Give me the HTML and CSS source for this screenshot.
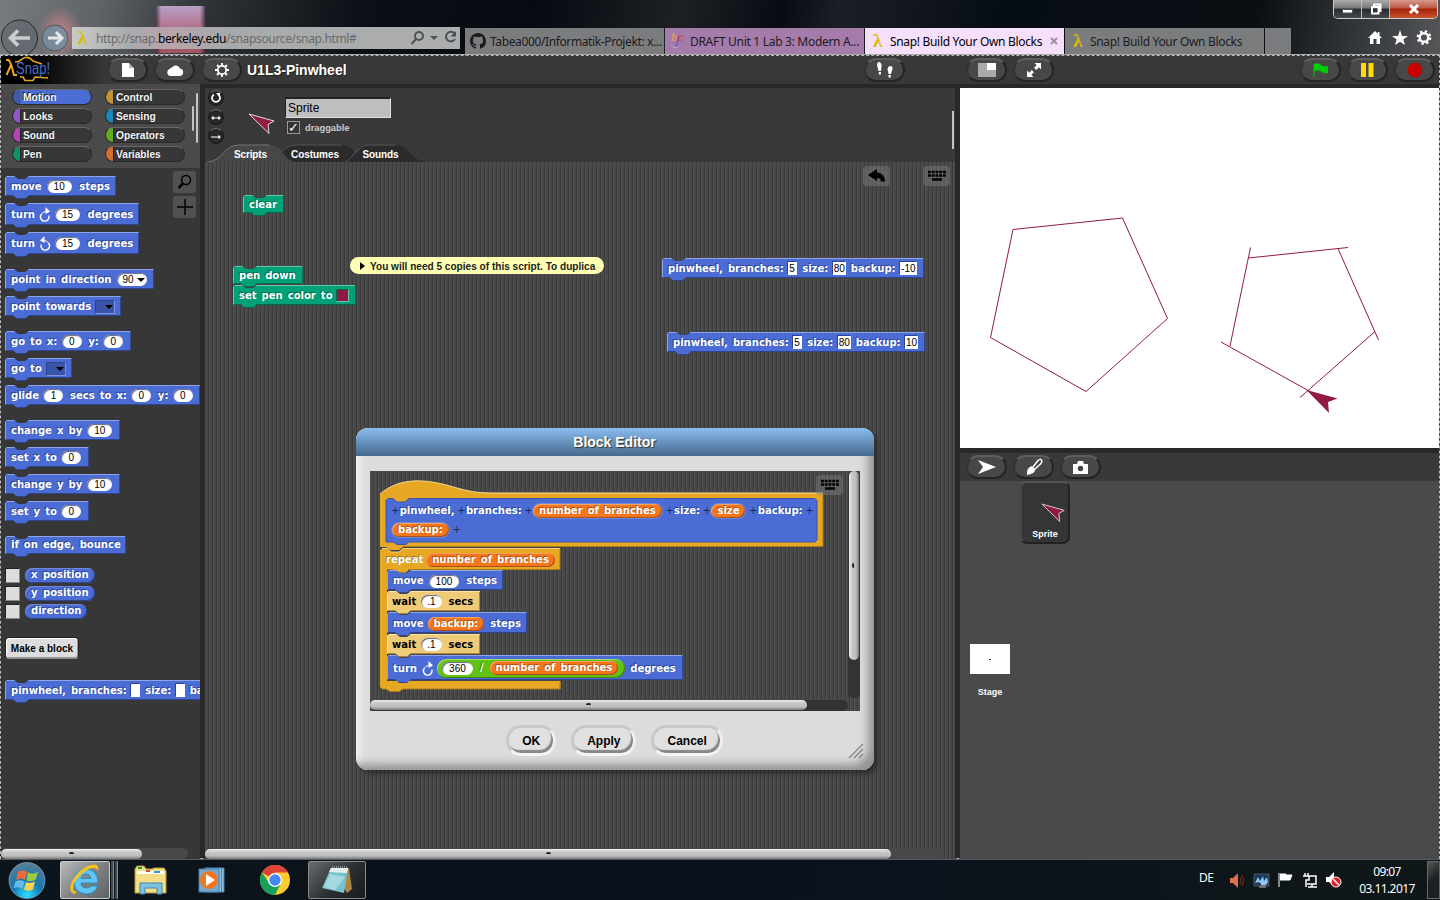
FILE: index.html
```html
<!DOCTYPE html>
<html lang="de">
<head>
<meta charset="utf-8">
<title>Snap! Build Your Own Blocks</title>
<link rel="stylesheet" href="styles.css">
</head>
<body>
<svg width="0" height="0" class="defs">
  <defs>
    <symbol id="cw" viewBox="0 0 12 16"><path d="M2.500 7A4.300 4.300 0 1 0 9.800 8.500" fill="none" stroke="#fff" stroke-width="1.400"/><path d="M2.500 7Q4 4.500 7 4.500" fill="none" stroke="#fff" stroke-width="1"/><path d="M6.500 0L11 4.500L6.500 7Z" fill="#fff"/></symbol>
    <symbol id="ccw" viewBox="0 0 12 16"><path d="M9.500 7A4.300 4.300 0 1 1 2.200 8.500" fill="none" stroke="#fff" stroke-width="1.400"/><path d="M9.500 7Q8 4.500 5 4.500" fill="none" stroke="#fff" stroke-width="1"/><path d="M5.500 0L1 4.500L5.500 7Z" fill="#fff"/></symbol>
    <symbol id="arrow" viewBox="0 0 28 22"><path d="M1 1L26 8L20 11.500L21 20.500Z" fill="#901a44" stroke="#ddd" stroke-width="1"/></symbol>
    <symbol id="keys" viewBox="0 0 18 12"><path d="M0 2H18M0 5.500H18" stroke="#000" stroke-width="2.600" stroke-dasharray="2.900 .85"/><path d="M4 9.500H14" stroke="#000" stroke-width="2.500"/></symbol>
  </defs>
</svg>

<header class="chrome">
  <svg class="nav" width="72" height="54" viewBox="0 0 72 54"><circle cx="19.500" cy="38" r="18" fill="#586068" fill-opacity=".45" stroke="#26292c"/><path d="M30 38H11M18 30.500L10.500 38L18 45.500" fill="none" stroke="#ccc" stroke-width="3.600"/><circle cx="55" cy="38" r="13" fill="#6e93a6" fill-opacity=".7" stroke="#4d565d"/><path d="M48 38H61M56 32L62 38L56 44" fill="none" stroke="#e2e8ea" stroke-width="3"/></svg>
  <div class="address"><span class="lam">λ</span><span class="url">http://snap.<b>berkeley.edu</b>/snapsource/snap.html#</span>
    <svg width="50" height="20" viewBox="0 0 50 20"><g fill="none" stroke="#4e5153" stroke-width="2"><circle cx="9" cy="8" r="4"/><path d="M6 11L1.500 16M44.500 5.500A4.800 4.800 0 1 0 45 11"/></g><path d="M20 8H28L24 12ZM46 3V8.500H40.500Z" fill="#4e5153"/></svg>
  </div>
  <nav class="tabs">
    <div class="tab t1"><svg width="16" height="16" viewBox="0 0 16 16"><path fill="#1b1b1b" d="M8 0C3.580 0 0 3.580 0 8c0 3.540 2.290 6.530 5.470 7.590.4.070.55-.17.55-.38v-1.490c-2.010.37-2.530-.49-2.690-.94-.09-.23-.48-.94-.82-1.130-.28-.15-.68-.52-.01-.53.63-.01 1.080.58 1.230.82.72 1.210 1.870.87 2.330.66.07-.52.28-.87.51-1.070-1.780-.2-3.640-.89-3.640-3.950 0-.87.31-1.590.82-2.150-.08-.2-.36-1.020.08-2.120 0 0 .67-.21 2.200.82a7.600 7.600 0 0 1 4 0c1.530-1.040 2.200-.82 2.200-.82.44 1.100.16 1.920.08 2.120.51.56.82 1.270.82 2.150 0 3.070-1.870 3.750-3.650 3.950.29.25.54.73.54 1.480v2.200c0 .21.15.46.55.38A8 8 0 0 0 16 8c0-4.420-3.580-8-8-8Z"/></svg><span>Tabea000/Informatik-Projekt: x...</span></div>
    <div class="tab t2"><svg class="bjc" width="15" height="18" viewBox="0 0 15 18"><text x="1" y="9" fill="#e09a5c">b</text><text x="6" y="12" fill="#615fb9">j</text><text x="8" y="9" fill="#d14a60">c</text><path d="M1 13Q5 18 9 14" fill="none" stroke="#b9a5cf"/></svg><span>DRAFT Unit 1 Lab 3: Modern A...</span></div>
    <div class="tab t3"><span class="lam">λ</span><span>Snap! Build Your Own Blocks</span><svg width="8" height="8" viewBox="0 0 8 8"><path d="M1 1L7 7M7 1L1 7" stroke="#a08fa2" stroke-width="2"/></svg></div>
    <div class="tab t4"><span class="lam">λ</span><span>Snap! Build Your Own Blocks</span></div>
    <div class="tab t5"></div>
  </nav>
  <div class="winside">
    <div class="winbtns"><span><svg width="11" height="10" viewBox="0 0 11 10"><path d="M.5 5.500H10.500V9H.5Z" fill="#fff" stroke="#555"/></svg></span><span><svg width="12" height="12" viewBox="0 0 12 12"><path d="M4 3V1.500H10.500V8H9M2 4H8.500V10.500H2Z" fill="none" stroke="#fff" stroke-width="2"/></svg></span><span class="x"><svg width="12" height="10" viewBox="0 0 12 10"><path d="M2 1L10 9M10 1L2 9" stroke="#fff" stroke-width="3"/></svg></span></div>
    <svg class="fav" width="64" height="18" viewBox="0 0 64 18"><path d="M7 2L0 9H2V15H5.500V10H8.500V15H12V9H14L11.500 6.500V3H9.800V4.700Z" fill="#fff"/><path d="M32 1L34 7H40L35.300 10.500L37 16L32 12.700L27 16L28.700 10.500L24 7H30Z" fill="#fff"/><circle cx="56" cy="8.500" r="4.300" fill="none" stroke="#fff" stroke-width="2.400"/><circle cx="56" cy="8.500" r="6.200" fill="none" stroke="#fff" stroke-width="2.300" stroke-dasharray="2.400 2.470"/></svg>
  </div>
</header>

<main class="app">
  <div class="toolbar">
    <div class="logo"><svg width="50" height="27" viewBox="0 0 50 27"><path d="M10 6Q14 6 17 3Q23 -1 28 5L37 8M15 21L18 21L20 24.500H28L30 21L43 22" fill="none" stroke="#e5a418" stroke-width="1.600"/><path d="M1 4H3.500Q5.500 5 9 19H12M6 9L1.500 19" fill="none" stroke="#f0a818" stroke-width="2"/><text x="11" y="18" class="logotext" textLength="34" lengthAdjust="spacingAndGlyphs">Snap!</text></svg></div>
    <div class="btn"><svg width="12" height="14" viewBox="0 0 12 14"><path d="M0 0H7V5H12V14H0Z" fill="#fff"/><path d="M7 0L12 5H7Z" fill="#bbb"/></svg></div>
    <div class="btn"><svg width="18" height="12" viewBox="0 0 18 12"><path d="M4 12A3.700 3.700 0 0 1 3.500 5A3 3 0 0 1 6 3.500A4.500 4.500 0 0 1 14 4.500A3.800 3.800 0 0 1 14 12Z" fill="#fff"/></svg></div>
    <div class="btn"><svg width="16" height="16" viewBox="0 0 16 16"><circle cx="8" cy="8" r="4.200" fill="none" stroke="#fff" stroke-width="1.800"/><path d="M8 1V4M8 12V15M1 8H4M12 8H15M3 3L5 5M11 11L13 13M13 3L11 5M5 11L3 13" stroke="#fff" stroke-width="1.800"/></svg></div>
    <h1>U1L3-Pinwheel</h1>
    <div class="btn foot"><svg width="18" height="16" viewBox="0 0 18 16"><path d="M1 3Q1 0 3.500 0Q6 1 5.500 5L5 9H2.500ZM2.700 10H5V12Q4 13.500 2.800 12Z" fill="#fff"/><path d="M16.500 7Q17 4 14.500 4Q12 4 11.500 7L12.500 12H15ZM12.500 13H14.800V15Q13.500 16.500 12.500 15Z" fill="#fff"/></svg></div>
    <div class="btn small"><svg width="18" height="14" viewBox="0 0 18 14"><path d="M0 0H18V14H0Z" fill="#aaa"/><path d="M9 0H18V7H9Z" fill="#fff"/></svg></div>
    <div class="btn"><svg width="16" height="16" viewBox="0 0 16 16"><path d="M8.500 1H15V7.500L12.800 5.300L10.300 8L8 5.700L10.700 3.200ZM7.500 15H1V8.500L3.200 10.700L5.700 8L8 10.300L5.300 12.800Z" fill="#fff"/></svg></div>
    <div class="btn flag"><svg width="16" height="16" viewBox="0 0 16 16"><path d="M1 2V15" stroke="#00b000" stroke-width="1.500"/><path d="M1 2Q5 0 8 3Q11 5 15 4V11Q11 12 8 9.500Q5 7.500 1 9.500Z" fill="#0c0"/></svg></div>
    <div class="btn"><svg width="13" height="14" viewBox="0 0 13 14"><path d="M0 0H5V14H0ZM7.500 0H12.500V14H7.500Z" fill="#ffd900"/></svg></div>
    <div class="btn"><svg width="16" height="16" viewBox="0 0 16 16"><path d="M5 1H11L15 5V11L11 15H5L1 11V5Z" fill="#c80000"/></svg></div>
  </div>

  <div class="cols">
    <aside class="left">
      <div class="cats">
        <div class="cat on c1">Motion</div><div class="cat c2">Control</div>
        <div class="cat c3">Looks</div><div class="cat c4">Sensing</div>
        <div class="cat c5">Sound</div><div class="cat c6">Operators</div>
        <div class="cat c7">Pen</div><div class="cat c8">Variables</div>
        <i class="grip g1"></i><i class="grip g2"></i>
      </div>
      <div class="palette">
        <div class="tools"><div class="tool"><svg width="16" height="16" viewBox="0 0 16 16"><circle cx="9" cy="6" r="4.500" fill="none" stroke="#000" stroke-width="1.500"/><path d="M6 9.500L1.500 14" stroke="#000" stroke-width="2.500"/></svg></div><div class="tool"><svg width="16" height="16" viewBox="0 0 16 16"><path d="M0 8H16M8 0V16" stroke="#000" stroke-width="1.500"/></svg></div></div>
        <div class="block">move<span class="num">10</span>steps</div>
        <div class="block tall">turn<svg width="12" height="16"><use href="#cw"/></svg><span class="num">15</span>degrees</div>
        <div class="block tall">turn<svg width="12" height="16"><use href="#ccw"/></svg><span class="num">15</span>degrees</div>
        <div class="block sec dir">point in direction<span class="num dd">90<i></i></span></div>
        <div class="block">point towards<span class="menu"></span></div>
        <div class="block sec">go to x:<span class="num one">0</span>y:<span class="num one">0</span></div>
        <div class="block">go to<span class="menu"></span></div>
        <div class="block">glide<span class="num one">1</span>secs to x:<span class="num one">0</span>y:<span class="num one">0</span></div>
        <div class="block sec">change x by<span class="num">10</span></div>
        <div class="block">set x to<span class="num one">0</span></div>
        <div class="block">change y by<span class="num">10</span></div>
        <div class="block">set y to<span class="num one">0</span></div>
        <div class="block sec low">if on edge, bounce</div>
        <div class="watch first"><i></i><span>x position</span></div>
        <div class="watch"><i></i><span>y position</span></div>
        <div class="watch"><i></i><span>direction</span></div>
        <button class="make">Make a block</button>
        <div class="block custom">pinwheel, branches:<span class="slot e"></span>size:<span class="slot e"></span>backup:<span class="slot e"></span></div>
        <div class="hbar"><i></i></div>
      </div>
    </aside>

    <section class="mid">
      <div class="spritebar">
        <div class="rot"><i><svg width="10" height="10" viewBox="0 0 10 10"><path d="M3 1.500A4 4 0 1 0 7 1.500" fill="none" stroke="#fff" stroke-width="1.700"/><path d="M5 0H9V4Z" fill="#fff"/></svg></i><i><svg width="10" height="10" viewBox="0 0 10 10"><path d="M1 6H9M2.500 4.500L1 6L2.500 7.500M7.500 4.500L9 6L7.500 7.500" fill="none" stroke="#fff" stroke-width="1.100"/></svg></i><i><svg width="10" height="10" viewBox="0 0 10 10"><path d="M0 6H9M7.500 4.500L9 6L7.500 7.500" fill="none" stroke="#fff" stroke-width="1.100"/></svg></i></div>
        <svg class="costume" width="28" height="22"><use href="#arrow"/></svg>
        <div class="name"><div class="field">Sprite</div><div class="drag"><i>✓</i>draggable</div></div>
        <svg class="stabs" width="220" height="18" viewBox="0 0 220 18"><path d="M135 18C150 16 148 1 163 1H188C205 1 200 15 219 18Z" fill="#2b2b2b"/><path d="M135 18C150 16 148 1 163 1H188" fill="none" stroke="#555"/><path d="M55 18C75 16 75 1 90 1H135C148 1 148 15 160 18Z" fill="#2b2b2b"/><path d="M70 13C76 8 78 1 90 1H135M138 18C143 16 147 9 151 5" fill="none" stroke="#555"/><path d="M0 18C17 17 16 1 32 1H62C76 1 75 15 88 18Z" fill="#474747"/><path d="M0 18C17 17 16 1 32 1H62" fill="none" stroke="#777"/><text x="27" y="14" textLength="33">Scripts</text><text x="84" y="14" textLength="48">Costumes</text><text x="155.500" y="14" textLength="36">Sounds</text></svg>
        <i class="edge"></i>
      </div>
      <div class="scripts">
        <div class="key k1"><svg width="18" height="14" viewBox="0 0 18 14"><path d="M0 6L9 0V3.500Q16.500 4 17 12.500H13Q13 9 9 9V12Z" fill="#000"/></svg></div>
        <div class="key k2"><svg width="18" height="12"><use href="#keys"/></svg></div>
        <div class="block pen s1">clear</div>
        <div class="block pen s2">pen down</div>
        <div class="block pen s3">set pen color to<span class="swatch"></span></div>
        <div class="comment s4"><i></i>You will need 5 copies of this script. To duplica</div>
        <div class="block s5">pinwheel, branches:<span class="slot">5</span>size:<span class="slot">80</span>backup:<span class="slot">-10</span></div>
        <div class="block s6">pinwheel, branches:<span class="slot">5</span>size:<span class="slot">80</span>backup:<span class="slot">10</span></div>
        <div class="hbar wide"><i></i></div>

        <div class="dialog">
          <div class="dtitle">Block Editor</div>
          <div class="editor">
            <svg class="shapes" width="478" height="232" viewBox="0 0 478 232">
              <path d="M10 23C30 6 55 8 80 15C100 21 108 22 125 22H453V76H33L29 79H20L16 76H10Z" fill="#e6a822"/>
              <path d="M10 23C30 6 55 8 80 15C100 21 108 22 125 22H453" fill="none" stroke="#f5d891"/><path d="M453 23V75.500H33" fill="none" stroke="#a87a18"/>
              <path d="M12 77.500H17L21 81H29L33 77.500H190V98.500H39L36 101.500H27L23 98.500H17V210H190.500V218H33L29 220.500H20L16 218H12L10 216V79.500Z" fill="#e6a822"/>
              <path d="M12 77.500H17L21 81H29L33 77.500H190" fill="none" stroke="#f3cf7c"/><path d="M190 78V98.500H39M190 211V218H33L29 220.500H20L16 218H12" fill="none" stroke="#a87a18"/>
              <path d="M18 27.500H23L27 31H35L39 27.500H445L447 29.500V69L445 71H39L36 73.500H27L23 71H16V29.500Z" fill="#4a6cd4" stroke="#3a55a8"/>
            </svg>
            <div class="proto"><div class="row"><em>+</em>pinwheel,<em>+</em>branches:<em>+</em><span class="var o">number of branches</span><em>+</em>size:<em>+</em><span class="var o">size</span><em>+</em>backup:<em>+</em></div><div class="row"><span class="var o">backup:</span><em>+</em></div></div>
            <div class="rep">repeat<span class="var">number of branches</span></div>
            <div class="body">
              <div class="block b1">move<span class="num">100</span>steps</div>
              <div class="block ctl b2">wait<span class="num one">.1</span>secs</div>
              <div class="block b3">move<span class="var">backup:</span>steps</div>
              <div class="block ctl b4">wait<span class="num one">.1</span>secs</div>
              <div class="block b5">turn<svg width="12" height="16"><use href="#cw"/></svg><span class="op"><span class="num">360</span>/<span class="var">number of branches</span></span>degrees</div>
            </div>
            <div class="key k3"><svg width="18" height="12"><use href="#keys"/></svg></div>
            <div class="vbar"><i></i></div><div class="hbar in"><i></i></div>
          </div>
          <div class="dbtns"><button>OK</button><button>Apply</button><button>Cancel</button></div>
          <svg class="resize" width="14" height="14" viewBox="0 0 14 14"><path d="M0 14L14 0M5 14L14 5M10 14L14 10" stroke="#777" stroke-width="1.200"/></svg>
        </div>
      </div>
    </section>

    <section class="right">
      <svg class="stage" width="479" height="360" viewBox="960 88 479 360"><g fill="none" stroke="#901a44"><path d="M1013 229.500L1122.500 218L1167.500 318.500L1086 391.500L990.500 337.500Z"/><path d="M1230 346L1250.500 247.500M1248.500 258L1348 247.500M1338 248.500L1378.500 340M1375 331.500L1300 397.500M1310 391.500L1221 342"/></g><path d="M1306.500 390L1337.500 398.500L1328 402L1329 413Z" fill="#901a44"/></svg>
      <div class="cbar"><div class="btn"><svg width="18" height="14" viewBox="0 0 18 14"><path d="M0 0L18 7L0 14L5 7Z" fill="#fff"/></svg></div><div class="btn"><svg width="18" height="18" viewBox="0 0 18 18"><path d="M8 9L13 2.500Q15 .5 16.500 2Q17.500 4 15.500 6L10 11" fill="none" stroke="#fff" stroke-width="1.500"/><path d="M7 8L10.500 11.500Q9 16 2 17Q1 10 7 8Z" fill="#fff"/></svg></div><div class="btn"><svg width="16" height="13" viewBox="0 0 16 13"><path d="M0 3H4L5 0H10L11 3H15V13H0Z" fill="#fff"/><circle cx="7.500" cy="7.500" r="2.700" fill="#444"/></svg></div></div>
      <div class="corral">
        <div class="stagecell"><div class="thumb"><i></i></div><span>Stage</span></div>
        <div class="sprite"><svg width="28" height="22"><use href="#arrow"/></svg><span>Sprite</span></div>
      </div>
    </section>
  </div>
</main>

<footer class="taskbar">
  <svg class="start" width="40" height="40" viewBox="0 0 40 40"><defs><radialGradient id="orb" cx=".5" cy=".9" r=".9"><stop offset="0" stop-color="#2be0ff"/><stop offset=".45" stop-color="#1676b4"/><stop offset="1" stop-color="#5c7f96"/></radialGradient></defs><circle cx="20" cy="20.500" r="18" fill="url(#orb)" stroke="#9cb8c6" stroke-opacity=".6"/><path d="M11 12Q15 9 20 12L18 20Q14 17 9 20Z" fill="#ed6a35"/><path d="M21 12.500Q26 15 31 12L28.500 20Q24 22 19.500 20.500Z" fill="#9bcb3c"/><path d="M8.500 21.500Q13 19 17.500 21.500L15.500 29Q12 26 6.500 28Z" fill="#66bbea"/><path d="M19 22Q23 24 28 21.500L26 29.500Q22 32 17 29.500Z" fill="#fcd14c"/></svg>
  <div class="task ie"><svg width="32" height="34" viewBox="0 0 32 34"><path d="M29 20H12Q12.500 25 17.500 25Q21 25 22 23H28.500Q26 31 17 31Q5 30 5 18Q6 6 17.500 6Q29 7 29 20ZM12 15.500H22Q21.500 11 17 11Q12.500 11 12 15.500Z" fill="#62c4f4" fill-rule="evenodd" stroke="#1b88c8" stroke-width=".8"/><path d="M5 31C-5 27 7 6 22 2Q31 0 29 8Q27 3 20 6C9 11 1 24 5 28Q6 29 8 28Q7 31 5 31Z" fill="#f6c21c"/></svg></div><i class="stack"></i><i class="stack"></i>
  <svg class="tic a" width="34" height="32" viewBox="0 0 34 32"><path d="M1 5L3 2H10L12 5H18L20 4H30L32 7V29H1Z" fill="#f3dd86" stroke="#b99536"/><path d="M3 7H30V10H3Z" fill="#fff"/><path d="M4 3H8V5H4Z" fill="#2a9b39"/><path d="M12 6H16V8H12Z" fill="#d43"/><path d="M20 7H26V9H20Z" fill="#39d"/><path d="M6 30V19H28V30H23V24H11V30Z" fill="#80c1de" stroke="#3c87b2"/></svg>
  <svg class="tic b" width="30" height="30" viewBox="0 0 30 30"><path d="M8 3H27V27H8Z" fill="#8fbfe0" stroke="#4a86b4"/><path d="M2 4H22V27H2Z" fill="#77a9cf" stroke="#4a7fab"/><path d="M24.500 3V27" stroke="#4a86b4"/><circle cx="12" cy="15" r="9" fill="#f2761e"/><path d="M9 9L18 15L9 21Z" fill="#fff"/></svg>
  <svg class="tic c" width="30" height="30" viewBox="0 0 30 30"><circle cx="15" cy="15" r="15" fill="#fbcd2e"/><path d="M15 15L2 7.500A15 15 0 0 1 28 7.500H15Z" fill="#db4437"/><path d="M2 7.500A15 15 0 0 0 15 30L21 18L9 18Z" fill="#16a05d"/><circle cx="15" cy="15" r="7" fill="#fff"/><circle cx="15" cy="15" r="5.700" fill="#4587f3"/></svg>
  <div class="task note"><svg width="32" height="30" viewBox="0 0 32 30"><path d="M11 3H28L31 24L26 28Z" fill="#a98745"/><path d="M10 3H27L23 28L1 23Z" fill="#79c3cf"/><path d="M10 3H27L26 8L8 7Z" fill="#e3eef0"/><path d="M9 9L24 12L14 25L3 22Z" fill="#c3e7ea" opacity=".6"/><path d="M11 2H27" stroke="#888" stroke-width="2" stroke-dasharray="1 1"/></svg></div>
  <span class="lang">DE</span>
  <svg class="tray" width="116" height="20" viewBox="0 0 116 20"><path d="M0 8H3L8 3V18L3 13H0Z" fill="#df7047"/><path d="M10 7Q12 10 10 14M12 5Q15 10 12 16" fill="none" stroke="#70331c"/><path d="M24 4H39V16H24Z" fill="#16375a" stroke="#777" stroke-width=".6"/><path d="M25 13L28 7L30 11L33 6L34 11L37 7L38 12L36 15H32L29 12Z" fill="#91c4ef"/><path d="M29 17H36M31 15H35" stroke="#bbb"/><path d="M49 3V17M50 4H56V10H50M56 5H62L60 10H56" fill="#fff" stroke="#fff"/><path d="M78 6H86V14H77M82 14V17M78 17H87M73 6H79V10H76V17M75 3V6M78 3V6" fill="none" stroke="#fff" stroke-width="1.500"/><path d="M96 7H99L104 2V16L99 12H96Z" fill="#fff"/><circle cx="106" cy="12" r="5" fill="#e11c24" stroke="#fff"/><path d="M103 9L109 15" stroke="#fff" stroke-width="1.500"/></svg>
  <div class="clock"><span>09:07</span><span>03.11.2017</span></div><i class="desk"></i>
</footer>
</body>
</html>
```
FILE: styles.css
```css
* { box-sizing: border-box; }
body { margin: 0; width: 1440px; height: 900px; overflow: hidden; display: flex; flex-direction: column; background: #282828; font-family: "Liberation Sans", Arial, sans-serif; color: #fff; }
i, em { font-style: normal; display: block; }
svg { display: block; flex: none; }
.defs { position: absolute; }
button { font-family: inherit; padding: 0; }

/* browser frame */
.chrome { height: 55px; flex: none; display: flex; align-items: flex-end; font-family: "Noto Sans", sans-serif; font-size: 12px; border-bottom: 1px solid #aaa; background: radial-gradient(ellipse 22px 28px at 60px 34px, #a87c80 0 35%, transparent 100%), linear-gradient(90deg, rgba(11,16,22,.6), transparent 5px calc(100% - 5px), rgba(11,16,22,.6)) 156px 6px / 49px 47px no-repeat, linear-gradient(#b8a0c5 0, #b05f74 30px, #a45563 45px) 156px 6px / 49px 47px no-repeat, linear-gradient(100deg, #777c80 0, #5f6367 7%, #303438 14%, #0b1016 25%, #060b11 37%, #1d2025 47%, #080c12 54%, #1b1f25 58%, #070d15 69%, #0b0f14 87%, #555759 100%); }
.nav { height: 54px; overflow: hidden; }
.address { width: 388px; height: 22px; margin: 0 0 5px; display: flex; align-items: center; background: linear-gradient(90deg, #c7cbc5, #a9aaab 15%, #b9a3ab 25%, #a8a9aa 38%, #adafaf); color: #686b6d; }
.lam { color: #d9bb00; font: bold 19px/20px "Liberation Serif", serif; width: 15px; text-align: center; flex: none; }
.address .lam { margin: 0 6px 0 3px; }
.url { width: 314px; font-size: 12px; letter-spacing: -.35px; white-space: nowrap; }
.url b { font-weight: normal; color: #000; }
.tabs { display: flex; margin-left: 5px; gap: 1px; }
.tab { height: 26px; display: flex; align-items: center; color: #1d1d1d; white-space: nowrap; width: 199px; background: #7b7c7e; letter-spacing: -.3px; padding-left: 5px; gap: 5px; }
.tab.t1 { letter-spacing: -.38px; gap: 4px; }
.tab.t2 { background: #a57bab; letter-spacing: -.3px; }
.tab.t3 { background: #f6dffa; color: #000; letter-spacing: -.32px; }
.tab.t4 { letter-spacing: -.32px; }
.tab.t5 { width: 26px; }
.tab.t3 svg { margin-left: 3px; }
.bjc text { font: italic bold 10px "Liberation Sans", sans-serif; }
.winside { flex: 1; height: 54px; display: flex; flex-direction: column; align-items: flex-end; justify-content: space-between; }
.winbtns { display: flex; width: 105px; height: 19px; border: 1px solid #ccc; border-top: 0; border-radius: 0 0 5px 5px; margin-right: 2px; overflow: hidden; }
.winbtns span { width: 28px; display: flex; align-items: center; justify-content: center; padding-bottom: 1px; background: linear-gradient(#aaa, #777 45%, #252a2e 50%, #454a4e); border-right: 1px solid #bbb; }
.winbtns .x { flex: 1; border: 0; background: linear-gradient(#d79a8d, #bc5640 45%, #a12207 50%, #cd5330); }
.fav { margin: 0 8px 7px 0; }

/* application frame */
.app { height: 804px; flex: none; border: 1px dashed #bbb; background: #282828; }
.toolbar { height: 28px; display: flex; align-items: center; background: #383838; }
.logo { width: 106px; flex: none; background: linear-gradient(90deg, #000 30%, #383838); height: 28px; padding-left: 4px; }
.logotext { font: 17px "Liberation Sans", sans-serif; fill: #4a6ed0; }
.btn { width: 41px; height: 24px; margin-right: 6px; border-radius: 12px; background: #484848; border: 2px solid #242424; border-top-color: #5d5d5d; border-left-color: #333; display: flex; align-items: center; justify-content: center; flex: none; }
.btn:last-child { margin-right: 0; }
h1 { font-size: 14px; line-height: 18px; margin: 0 0 0 -1px; width: 617px; flex: none; text-shadow: 1px 1px #222; }
.btn.foot { margin-right: 61px; }
.btn.flag { margin-left: 240px; }
.cols { display: flex; height: 775px; }
.left { width: 199px; margin-right: 5px; display: flex; flex-direction: column; }
.cats { position: relative; height: 84px; background: #4a4a4a; padding: 5px 14px 0 11px; display: grid; grid-template-columns: 80px 80px; column-gap: 13px; grid-auto-rows: 16px; row-gap: 3px; }
.cat { border-radius: 8px; border: 1px solid #292929; border-top-color: #666; font-weight: bold; font-size: 10.200px; line-height: 15px; padding-left: 10px; text-shadow: -1px -1px #222; color: #f4f4f4; background: linear-gradient(90deg, var(--c) 0 7px, #222 7px 8px, #373737 8px); }
.c1 { --c: #5770b8; } .c2 { --c: #c19336; } .c3 { --c: #8f56c4; } .c4 { --c: #1c87bb; } .c5 { --c: #b345b3; } .c6 { --c: #5fae1d; } .c7 { --c: #0d9167; } .c8 { --c: #d06f2e; }
.cat.on { background: linear-gradient(90deg, #3e5aae 7px, #4a6cd4 8px); }
.grip { position: absolute; width: 2px; background: #c4c4c4; right: 2px; top: 9px; height: 50px; border-radius: 1px; }
.grip.g2 { right: 6px; top: 22px; height: 25px; }
.palette { position: relative; flex: 1; background: #373737; padding: 8px 0 0 4px; overflow: hidden; }
.tools { position: absolute; right: 4px; top: 3px; display: grid; gap: 3px; }
.tool { width: 23px; height: 22px; border-radius: 3px; background: #515151; display: flex; align-items: center; justify-content: center; }

/* blocks */
.block { --b: #4a6cd4; --l: #8ea4e6; --d: #2d458e; position: relative; z-index: 0; display: flex; align-items: center; width: max-content; height: 20px; margin-bottom: 7px; padding: 1px 6px 0; gap: 6px; font: bold 10px/14px "DejaVu Sans", Verdana, sans-serif; word-spacing: 1.600px; white-space: nowrap; text-shadow: -1px -1px var(--d); }
.block::before { content: ""; position: absolute; z-index: -1; inset: 0; background: var(--b); box-shadow: inset 1px 1px var(--l), inset -1px -1px var(--d); clip-path: polygon(0 2px, 2px 0, 9px 0, 13px 3px, 20px 3px, 24px 0, calc(100% - 1px) 0, 100% 1px, 100% calc(100% - 1px), calc(100% - 1px) 100%, 1px 100%, 0 calc(100% - 1px)); }
.block::after { content: ""; position: absolute; z-index: -1; left: 8px; bottom: -3px; width: 16px; height: 4px; background: linear-gradient(var(--b) 75%, var(--d) 75%); clip-path: polygon(0 0, 100% 0, 12px 100%, 4px 100%); }
.block.tall { height: 22px; }
.block > svg { margin: 0 -1px 0 -2px; }
.block.sec { margin-top: 15px; }
.block.low { height: 18px; padding: 0 5px 0 6px; }
.block.pen { --b: #00a078; --l: #66c6ae; --d: #006b50; }
.block.ctl { --b: #efcb78; --l: #f7e3b4; --d: #a8863c; color: #000; text-shadow: none; }
.num { font: 10px/12px "Liberation Sans", Arial, sans-serif; color: #000; text-shadow: none; background: #fff; height: 13px; border-radius: 7px; padding: 1px 7px 0; box-shadow: inset 1px 1px 1px #667; min-width: 25px; text-align: center; word-spacing: 0; margin-left: -1px; }
.num.one { min-width: 20px; padding: 1px 6px 0; margin-left: -1.500px; margin-right: .5px; }
.num:last-child { margin-right: 1.500px; }
.num.dd { width: 30px; display: flex; align-items: center; gap: 3px; padding: 0 2px 0 6px; }
.dd i { border: 4px solid transparent; border-top-color: #000; border-bottom: 0; }
.menu { width: 20px; height: 14px; background: #3a55a8; border: 1px solid #2d458e; border-right-color: #7f95d8; border-bottom-color: #7f95d8; display: flex; align-items: center; justify-content: flex-end; padding-right: 1px; margin-left: -2px; }
.menu::after { content: ""; border: 4px solid transparent; border-top-color: #000; border-bottom: 0; }
.slot { background: #fff; color: #000; font: 10px/12px "Liberation Sans", Arial, sans-serif; height: 13px; padding: 1px 1px 0; min-width: 9px; text-shadow: none; box-shadow: -1px -1px #2d458e; word-spacing: 0; margin-left: -.5px; }
.swatch { width: 13px; height: 13px; background: #901a44; border: 1px solid #006b50; border-right-color: #66c6ae; border-bottom-color: #66c6ae; margin-left: -3px; margin-right: 1px; }
.watch { display: flex; align-items: center; height: 18px; gap: 5px; }
.watch.first { margin-top: 12px; }
.watch i { width: 15px; height: 15px; background: #ddd; border: 1px solid #222; border-right-color: #888; border-bottom-color: #888; }
.watch span { height: 15px; border-radius: 8px; padding: 0 6px; background: #4a6cd4; box-shadow: inset 1px 1px #7188d8, inset -1px -1px #2d458e; font: bold 10px/14px "DejaVu Sans", sans-serif; word-spacing: 2px; text-shadow: -1px -1px #2d458e; }
.make { display: block; width: 74px; height: 22px; margin: 17px 0 21px; border-radius: 4px; border: 1px solid #222; border-bottom-color: #888; background: #ddd; box-shadow: inset 1px 1px #fff, inset -1px -1px #999; font-weight: bold; font-size: 10px; white-space: nowrap; }
.block.custom { gap: 5px; }
.hbar { position: absolute; left: 0; bottom: 0; width: 187px; height: 11px; padding-top: 1px; border-radius: 5px; background: #484848; }
.hbar i, .vbar i { width: 141px; height: 10px; border-radius: 5px; background: linear-gradient(#eee, #c8c8c8 30%, #bbb 70%, #777); }
.hbar i::after { content: ""; display: block; width: 5px; height: 2px; border-radius: 2px 2px 0 0; background: #222; margin: 0 auto; position: relative; top: 3px; }

/* sprite bar and scripting area */
.mid { width: 750px; margin-top: 4px; display: flex; flex-direction: column; }
.spritebar { position: relative; height: 74px; background: #393939; display: flex; }
.rot { padding: 2px 0 0 3px; display: flex; flex-direction: column; gap: 3px; width: 43px; }
.rot i { width: 16px; height: 16px; border-radius: 8px; background: #272727; border: 1px solid #1c1c1c; border-top-color: #666; display: flex; align-items: center; justify-content: center; }
.costume { margin-top: 25px; margin-right: 9px; }
.name { padding-top: 9px; }
.field { width: 106px; height: 21px; background: #bfbfbf; border: 1px solid #e0e0e0; border-top: 2px solid #222; border-left: 1px solid #222; color: #000; font-size: 12px; line-height: 18px; padding-left: 2px; }
.drag { display: flex; align-items: center; gap: 5px; margin: 3px 0 0 2px; font-weight: bold; font-size: 9.300px; color: #ccc; }
.drag i { width: 13px; height: 13px; border: 1px solid #999; background: #333; color: #fff; font: bold 13px/11px "DejaVu Sans", sans-serif; text-align: center; }
.stabs { position: absolute; left: 2px; bottom: 0; }
.stabs text { font: bold 10px "Liberation Sans", Arial, sans-serif; fill: #fff; }
.edge { position: absolute; right: 1px; top: 23px; width: 2px; height: 38px; background: #c4c4c4; }
.scripts, .editor { background: repeating-linear-gradient(90deg, #505050 0 1px, #484848 1px 3px, #3a3a3a 3px 4px); }
.scripts { position: relative; flex: 1; }
.scripts > .block, .comment, .dialog, .key { position: absolute; }
.s1 { left: 38px; top: 33px; } .s2 { left: 28px; top: 104px; } .s3 { left: 28px; top: 123px; } .s5 { left: 457px; top: 96px; } .s6 { left: 462px; top: 170px; }
.block.s1, .block.s2 { height: 18px; padding-right: 7px; }
.block.s5, .block.s6 { gap: 5px; padding-right: 7px; }
.comment { left: 145px; top: 95px; width: 254px; height: 17px; border-radius: 9px; background: #ffffb4; color: #222; font-weight: bold; font-size: 10.080px; line-height: 17px; display: flex; align-items: center; gap: 5px; padding: 1px 0 0 10px; white-space: nowrap; }
.comment i { border: 4px solid transparent; border-left: 5px solid #000; border-right: 0; margin-top: -1px; }
.key { width: 27px; height: 20px; border-radius: 4px; background: rgba(120,120,120,.5); display: flex; align-items: center; justify-content: center; }
.k1 { left: 658px; top: 4px; } .k2 { left: 718px; top: 4px; } .k3 { left: 446px; top: 4px; }
.hbar.wide { width: 738px; } .hbar.wide i { width: 686px; }

/* block editor */
.dialog { left: 151px; top: 266px; width: 518px; height: 342px; border-radius: 12px; background: #dcdcdc; box-shadow: 4px 4px 5px rgba(0,0,0,.35), inset -10px -10px 8px -4px #949494, inset 6px 0 7px -2px #f2f2f2; }
.dtitle { height: 28px; border-radius: 12px 12px 0 0; background: linear-gradient(#8bbdf0, #45698c); text-align: center; font-weight: bold; font-size: 14px; line-height: 29px; padding-right: 1px; text-shadow: 1px 1px 1px #333; }
.editor { position: relative; width: 490px; height: 240px; margin: 15px 0 0 14px; overflow: hidden; }
.shapes { position: absolute; left: 0; top: 0; }
.proto, .rep, .body { position: absolute; font: bold 10px/14px "DejaVu Sans", Verdana, sans-serif; word-spacing: 1.600px; text-shadow: -1px -1px #2d458e; white-space: nowrap; }
.proto { left: 21px; top: 31px; display: grid; gap: 1px; }
.row { display: flex; height: 18px; align-items: center; gap: 2.700px; }
.row em { color: #1d2b58; font-weight: normal; width: 6px; text-align: center; text-shadow: none; }
.var { height: 14px; border-radius: 7px; background: #f3761d; box-shadow: inset 1px 1px #f8a266, inset -1px -1px #a8501a; padding: 0 6px; line-height: 13px; text-shadow: -1px -1px #a8501a; }
.var.o { outline: 1px solid #7189d8; margin: 0 1px 0 0; }
.row + .row .var.o { margin: 0 1px 0 1px; }
.rep { left: 16px; top: 79px; height: 20px; display: flex; align-items: center; gap: 3px; text-shadow: -1px -1px #a07314; }
.body { left: 17px; top: 99px; }
.body .block { margin: 0 0 1px; }
.body .b1 { padding-top: 2px; }
.body .ctl { padding-left: 5px; padding-right: 7px; }
.body .num { margin-left: -1px; margin-right: 1px; }
.body .b3 { height: 21px; gap: 5px; padding-top: 3px; } .body .b5 { height: 25px; gap: 5px; padding-top: 3px; padding-right: 7px; }
.body .b3 .var { margin: -1px 1px 0 -1px; }
.body .b5 > svg { margin: 0 -2px 0 0; }
.op { display: flex; align-items: center; gap: 6px; height: 19px; border-radius: 10px; background: #62c213; padding: 0 7px 0 6px; margin-top: -2px; box-shadow: inset 1px 1px #a0da71, inset -1px -1px #41810d; text-shadow: -1px -1px #41810d; }
.op .num { min-width: 31px; } .op .var { margin-left: 0; }
.vbar { position: absolute; right: 0; top: 0; width: 12px; height: 227px; background: #333; border-radius: 5px; }
.vbar i { height: 189px; width: 10px; margin-left: 1px; background: linear-gradient(90deg, #eee, #c8c8c8 30%, #bbb 70%, #777); }
.vbar i::after { content: ""; display: block; width: 2px; height: 5px; border-radius: 2px 0 0 2px; background: #222; position: relative; left: 3px; top: 92px; }
.hbar.in { width: 478px; background: #333; padding: 0; } .hbar.in i { width: 437px; }
.dbtns { display: flex; justify-content: center; gap: 15px; margin: 14px 1px 0 0; }
.dbtns button { height: 31px; border-radius: 15px; border: 3px solid #c8c8c8; border-right-color: #eee; border-bottom-color: #f4f4f4; background: #e0e0e0; box-shadow: inset -2px -3px 1px #888; font-weight: bold; font-size: 12px; padding: 0 13px; color: #000; }
.resize { position: absolute; right: 11px; bottom: 12px; }

/* stage and corral */
.right { width: 479px; margin: 4px 0 0 5px; display: flex; flex-direction: column; }
.stage { background: #fff; }
.cbar { height: 28px; margin-top: 5px; padding: 2px 0 0 6px; background: #393939; display: flex; }
.corral { flex: 1; background: #4a4a4a; display: flex; font-weight: bold; font-size: 9px; text-align: center; }
.stagecell { width: 60px; padding-top: 163px; display: flex; flex-direction: column; align-items: center; }
.thumb { width: 40px; height: 30px; background: #fff; display: flex; align-items: center; justify-content: center; margin-bottom: 13px; }
.thumb i { width: 2px; height: 1px; background: #901a44; }
.sprite { width: 50px; height: 63px; border-radius: 7px; background: #353535; border: 2px solid #222; border-top-color: #555; border-left-color: #484848; padding-top: 20px; }
.sprite svg { margin: 0 0 6px 19px; width: 25px; height: 20px; }
.sprite span { display: block; line-height: 10px; }

/* taskbar */
.taskbar { height: 41px; flex: none; background: linear-gradient(90deg, #0d151c, #09101a 40%, #0a131c 60%, #101719); border-top: 1px solid #525c66; display: flex; align-items: center; font-family: "Noto Sans", sans-serif; font-size: 12px; }
.start { margin-left: 7px; margin-right: 13px; }
.task { width: 50px; height: 38px; border: 1px solid #ccc; border-radius: 2px; display: flex; align-items: center; justify-content: center; background: linear-gradient(135deg, #bbb, #808284 50%, #5f6366); }
.stack { width: 3px; height: 38px; border-right: 1px solid #888; background: #42474a; margin-left: 1px; }
.tic.a { margin-left: 16px; } .tic.b { margin-left: 29px; } .tic.c { margin-left: 33px; }
.task.note { width: 58px; margin-left: 18px; border-color: #888; background: linear-gradient(135deg, #6a6d6f, #2a2e31 55%, #181c1f); }
.lang { margin-left: 833px; width: 31px; padding-bottom: 5px; letter-spacing: -.5px; }
.tray { margin-right: 14px; }
.clock { width: 54px; display: flex; flex-direction: column; align-items: center; line-height: 17px; letter-spacing: -.6px; margin-right: 13px; }
.desk { width: 13px; height: 38px; border: 1px solid #666; background: linear-gradient(135deg, #555, #1c2022 50%); }
```
